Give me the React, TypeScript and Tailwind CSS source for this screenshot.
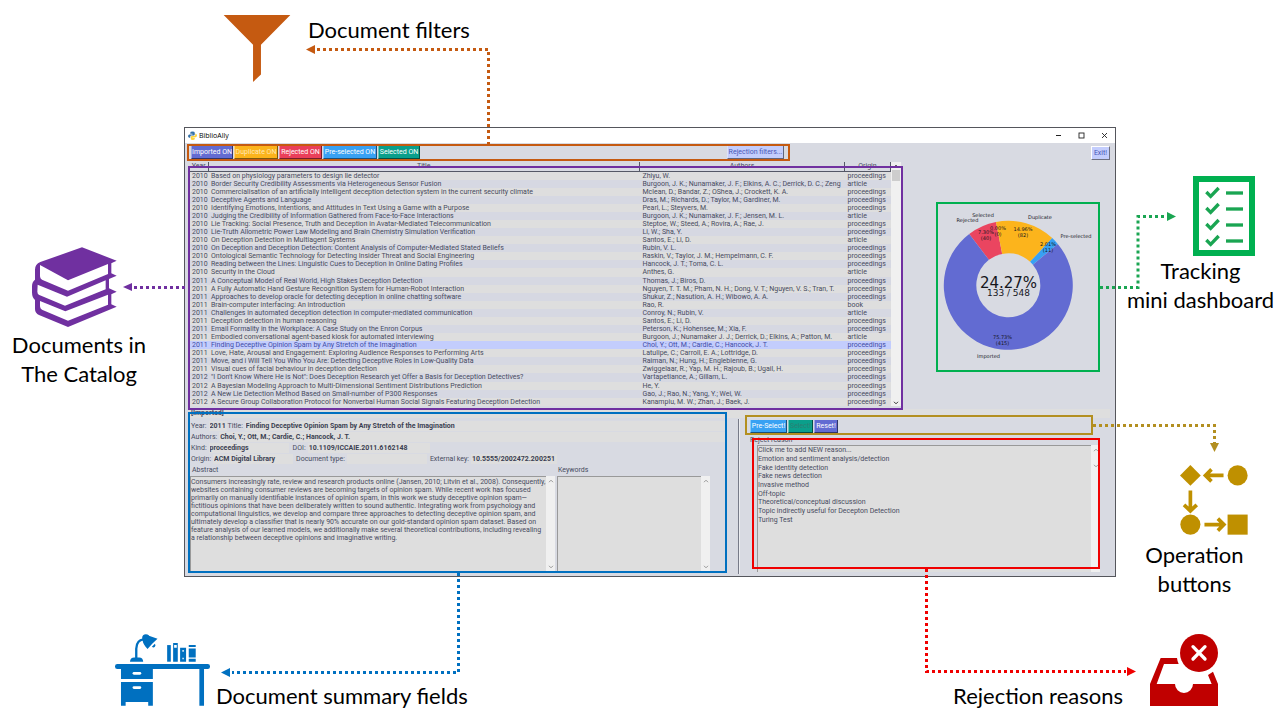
import type { ReactNode } from "react";

type Doc = [year: string, title: string, authors: string, origin: string];

const DOCS: Doc[] = [
  ["2010", "Based on physiology parameters to design lie detector", "Zhiyu, W.", "proceedings"],
  ["2010", "Border Security Credibility Assessments via Heterogeneous Sensor Fusion", "Burgoon, J. K.; Nunamaker, J. F.; Elkins, A. C.; Derrick, D. C.; Zeng", "article"],
  ["2010", "Commercialisation of an artificially intelligent deception detection system in the current security climate", "Mclean, D.; Bandar, Z.; OShea, J.; Crockett, K. A.", "proceedings"],
  ["2010", "Deceptive Agents and Language", "Dras, M.; Richards, D.; Taylor, M.; Gardiner, M.", "proceedings"],
  ["2010", "Identifying Emotions, Intentions, and Attitudes in Text Using a Game with a Purpose", "Pearl, L.; Steyvers, M.", "proceedings"],
  ["2010", "Judging the Credibility of Information Gathered from Face-to-Face Interactions", "Burgoon, J. K.; Nunamaker, J. F.; Jensen, M. L.", "article"],
  ["2010", "Lie Tracking: Social Presence, Truth and Deception in Avatar-Mediated Telecommunication", "Steptoe, W.; Steed, A.; Rovira, A.; Rae, J.", "proceedings"],
  ["2010", "Lie-Truth Allometric Power Law Modeling and Brain Chemistry Simulation Verification", "Li, W.; Sha, Y.", "proceedings"],
  ["2010", "On Deception Detection in Multiagent Systems", "Santos, E.; Li, D.", "article"],
  ["2010", "On Deception and Deception Detection: Content Analysis of Computer-Mediated Stated Beliefs", "Rubin, V. L.", "proceedings"],
  ["2010", "Ontological Semantic Technology for Detecting Insider Threat and Social Engineering", "Raskin, V.; Taylor, J. M.; Hempelmann, C. F.", "proceedings"],
  ["2010", "Reading between the Lines: Linguistic Cues to Deception in Online Dating Profiles", "Hancock, J. T.; Toma, C. L.", "proceedings"],
  ["2010", "Security in the Cloud", "Anthes, G.", "article"],
  ["2011", "A Conceptual Model of Real World, High Stakes Deception Detection", "Thomas, J.; Biros, D.", "proceedings"],
  ["2011", "A Fully Automatic Hand Gesture Recognition System for Human-Robot Interaction", "Nguyen, T. T. M.; Pham, N. H.; Dong, V. T.; Nguyen, V. S.; Tran, T.", "proceedings"],
  ["2011", "Approaches to develop oracle for detecting deception in online chatting software", "Shukur, Z.; Nasution, A. H.; Wibowo, A. A.", "proceedings"],
  ["2011", "Brain-computer interfacing: An introduction", "Rao, R.", "book"],
  ["2011", "Challenges in automated deception detection in computer-mediated communication", "Conroy, N.; Rubin, V.", "article"],
  ["2011", "Deception detection in human reasoning", "Santos, E.; Li, D.", "proceedings"],
  ["2011", "Email Formality in the Workplace: A Case Study on the Enron Corpus", "Peterson, K.; Hohensee, M.; Xia, F.", "proceedings"],
  ["2011", "Embodied conversational agent-based kiosk for automated interviewing", "Burgoon, J.; Nunamaker J. J.; Derrick, D.; Elkins, A.; Patton, M.", "article"],
  ["2011", "Finding Deceptive Opinion Spam by Any Stretch of the Imagination", "Choi, Y.; Ott, M.; Cardie, C.; Hancock, J. T.", "proceedings"],
  ["2011", "Love, Hate, Arousal and Engagement: Exploring Audience Responses to Performing Arts", "Latulipe, C.; Carroll, E. A.; Lottridge, D.", "proceedings"],
  ["2011", "Move, and i Will Tell You Who You Are: Detecting Deceptive Roles in Low-Quality Data", "Raiman, N.; Hung, H.; Englebienne, G.", "proceedings"],
  ["2011", "Visual cues of facial behaviour in deception detection", "Zwiggelaar, R.; Yap, M. H.; Rajoub, B.; Ugail, H.", "proceedings"],
  ["2012", "\"I Don't Know Where He is Not\": Does Deception Research yet Offer a Basis for Deception Detectives?", "Vartapetiance, A.; Gillam, L.", "proceedings"],
  ["2012", "A Bayesian Modeling Approach to Multi-Dimensional Sentiment Distributions Prediction", "He, Y.", "proceedings"],
  ["2012", "A New Lie Detection Method Based on Small-number of P300 Responses", "Gao, J.; Rao, N.; Yang, Y.; Wei, W.", "proceedings"],
  ["2012", "A Secure Group Collaboration Protocol for Nonverbal Human Social Signals Featuring Deception Detection", "Kanampiu, M. W.; Zhan, J.; Baek, J.", "proceedings"],
];

const SELECTED = 21;

const ABSTRACT =
  "Consumers increasingly rate, review and research products online (Jansen, 2010; Litvin et al., 2008). Consequently, " +
  "websites containing consumer reviews are becoming targets of opinion spam. While recent work has focused primarily on " +
  "manually identifiable instances of opinion spam, in this work we study deceptive opinion spam—fictitious opinions that " +
  "have been deliberately written to sound authentic. Integrating work from psychology and computational linguistics, we " +
  "develop and compare three approaches to detecting deceptive opinion spam, and ultimately develop a classifier that is " +
  "nearly 90% accurate on our gold-standard opinion spam dataset. Based on feature analysis of our learned models, we " +
  "additionally make several theoretical contributions, including revealing a relationship between deceptive opinions and " +
  "imaginative writing.";

const REASONS = [
  "Click me to add NEW reason...",
  "Emotion and sentiment analysis/detection",
  "Fake identity detection",
  "Fake news detection",
  "Invasive method",
  "Off-topic",
  "Theoretical/conceptual discussion",
  "Topic indirectly useful for Decepton Detection",
  "Turing Test",
];

const SLICES = [
  { name: "Rejected", color: "#ea4560", from: -37.3, to: -11 },
  { name: "Duplicate", color: "#fcb41c", from: -11, to: 42.9 },
  { name: "Pre-selected", color: "#38a1f3", from: 42.9, to: 50.1 },
  { name: "Imported", color: "#626bd2", from: 50.1, to: 322.7 },
];

function ring(cx: number, cy: number, outer: number, inner: number, from: number, to: number) {
  const at = (r: number, deg: number) => {
    const a = (deg * Math.PI) / 180;
    return `${(cx + r * Math.sin(a)).toFixed(2)} ${(cy - r * Math.cos(a)).toFixed(2)}`;
  };
  const large = to - from > 180 ? 1 : 0;
  return `M${at(outer, from)} A${outer} ${outer} 0 ${large} 1 ${at(outer, to)} L${at(inner, to)} A${inner} ${inner} 0 ${large} 0 ${at(inner, from)} Z`;
}

function Caption({ children, className = "" }: { children: ReactNode; className?: string }) {
  return (
    <p className={`whitespace-nowrap font-['Lato',sans-serif] text-[22px] leading-[29px] text-black ${className}`}>
      {children}
    </p>
  );
}

function Connector({ path, tip, color, width, height, className }: {
  path: string; tip: string; color: string; width: number; height: number; className: string;
}) {
  return (
    <svg width={width} height={height} className={`pointer-events-none absolute max-w-none overflow-visible ${className}`} aria-hidden="true">
      <path d={path} fill="none" stroke={color} strokeWidth="3" strokeDasharray="3 3" />
      <polygon points={tip} fill={color} />
    </svg>
  );
}

function ToolButton({ children, className }: { children: ReactNode; className: string }) {
  return (
    <button
      type="button"
      className={`h-[13px] shrink-0 whitespace-nowrap border-r border-b border-l border-l-white/40 border-r-black/50 border-b-black/50 text-center text-[7px] leading-[12px] ${className}`}
    >
      {children}
    </button>
  );
}

function Chevron({ up = false, className = "" }: { up?: boolean; className?: string }) {
  return (
    <svg viewBox="0 0 6 4" className={`h-1 w-1.5 ${className}`} aria-hidden="true">
      <path d={up ? "M1 3.2 3 1.2 5 3.2" : "M1 .8 3 2.8 5 .8"} fill="none" stroke="currentColor" strokeWidth="1" />
    </svg>
  );
}

function ScrollTrack({ className = "" }: { className?: string }) {
  return (
    <div className={`flex w-[9px] shrink-0 flex-col items-center justify-between bg-[#f0f0f0] py-[3px] text-[#999] ${className}`}>
      <Chevron up />
      <Chevron />
    </div>
  );
}

function Field({ id, label, value, width, className = "" }: {
  id: string; label: string; value: string; width: string; className?: string;
}) {
  return (
    <div className={`flex h-[11px] items-center ${className}`}>
      <label htmlFor={id} className="mr-[2px] shrink-0 whitespace-nowrap">{label}</label>
      <input id={id} readOnly value={value} className={`h-[10px] min-w-0 bg-[#dedede] px-px font-bold text-[#3b3f52] outline-none ${width}`} />
    </div>
  );
}

function Donut() {
  return (
    <svg viewBox="0 0 160 166" className="h-[166px] w-[160px]" role="img" aria-label="Tracking chart">
      {SLICES.map((s) => (
        <path key={s.name} d={ring(70.3, 81.3, 64.5, 32, s.from, s.to)} fill={s.color} />
      ))}
      <g fontFamily="'DejaVu Sans', sans-serif" fontSize="5" textAnchor="middle" fill="#15151c">
        <text x="45" y="13">Selected</text>
        <text x="29.5" y="18">Rejected</text>
        <text x="102" y="15">Duplicate</text>
        <text x="138" y="34">Pre-selected</text>
        <text x="50.5" y="154">Imported</text>
        <text x="48" y="30">7.30%</text>
        <text x="48" y="36">(40)</text>
        <text x="60" y="26">0.00%</text>
        <text x="60" y="32">(0)</text>
        <text x="85" y="27">14.96%</text>
        <text x="85" y="33">(82)</text>
        <text x="110" y="42">2.01%</text>
        <text x="110" y="48">(11)</text>
        <text x="64.5" y="135">75.73%</text>
        <text x="64.5" y="141">(415)</text>
        <text x="70.5" y="84" fontSize="15">24.27%</text>
        <text x="70.5" y="92" fontSize="9">133 / 548</text>
      </g>
    </svg>
  );
}

function FunnelIcon() {
  return (
    <svg viewBox="0 0 202 203" className="h-[67px] w-[68px] shrink-0" aria-hidden="true">
      <polygon points="0,0 202,0 113,90 113,180 89,203 89,90" fill="#c55a11" />
    </svg>
  );
}

function BooksIcon() {
  return (
    <svg viewBox="95 50 255 240" className="mr-[10px] h-20 w-[85px]" aria-hidden="true">
      <path
        fill="#7030a0"
        d="M245 51 349 91 333 99V129L349 136 326 146V174L349 184 333 192V222L349 229 203 290 116 254Q104 248 104 236V209Q95 202 95 186V168Q95 154 104 148V118Q104 101 120 95Z"
      />
      <path
        fill="#fff"
        d="M119 104 203 150 323 101V131L203 181 125 148Q119 145 119 138ZM112 163 200 199 316 150V177L194 226 117 194Q111 191 111 184ZM119 212 195 243 323 193V223L203 271 125 238Q119 235 119 228Z"
      />
    </svg>
  );
}

function ChecklistIcon() {
  return (
    <svg viewBox="0 0 186 240" className="ml-[46px] h-20 w-[62px]" aria-hidden="true">
      <path fill="#00b050" fillRule="evenodd" d="M0 0H186V240H0ZM18 18V222H168V18Z" />
      {[50, 98, 146, 194].map((y) => (
        <g key={y} fill="none" stroke="#1aa552" strokeWidth="10">
          <path d={`M40 ${y - 2} l13 13 24 -25`} />
          <path d={`M99 ${y + 1} H150`} />
        </g>
      ))}
    </svg>
  );
}

function FlowIcon() {
  return (
    <svg viewBox="0 0 203 209" className="ml-[38px] h-[70px] w-[68px]" aria-hidden="true">
      <g fill="#bf9000">
        <polygon points="31,0 62,31 31,62 0,31" />
        <circle cx="172" cy="31" r="30" />
        <circle cx="31" cy="178" r="30" />
        <rect x="142" y="148" width="60" height="60" />
      </g>
      <g fill="none" stroke="#bf9000" strokeWidth="11">
        <path d="M130 31H78M94 13 76 31 94 49" />
        <path d="M31 76V134M12 119 31 137 50 119" />
        <path d="M73 178H131M113 160 131 178 113 196" />
      </g>
    </svg>
  );
}

function DeskIcon() {
  return (
    <svg viewBox="0 0 286 216" className="mb-1 h-[72px] w-[95px] shrink-0" aria-hidden="true">
      <g fill="#0070c0">
        <rect x="0" y="90" width="286" height="15" rx="7" />
        <path d="M18 104H114V135H18ZM18 144H114V216H100V204H32V216H18ZM254 104H268V216H254Z" />
        <path d="M45 83Q46 70 58 70H73Q84 70 85 83Z" />
        <circle cx="93" cy="11" r="11" />
        <path d="M84 8 100 4 128 14 112 29 98 45 92 38Q80 24 84 8Z" />
        <path d="M111 38 120 29Q124 33 120 38T111 38Z" />
        <rect x="157" y="33" width="11" height="50" />
        <path fillRule="evenodd" d="M175 27H189V83H175ZM178 33V41H186V33Z" />
        <path fillRule="evenodd" d="M196 41H214V83H196ZM203 48V53H207V48ZM203 71V76H207V71Z" />
        <path d="M222 33H243V39H222ZM222 43H243V70H222ZM222 74H243V83H222Z" />
      </g>
      <path d="M64 74V44Q65 18 86 16" fill="none" stroke="#0070c0" strokeWidth="7" />
      <g fill="#fff">
        <rect x="53" y="114" width="26" height="8" rx="4" />
        <rect x="53" y="157" width="26" height="8" rx="4" />
      </g>
    </svg>
  );
}

function RejectTrayIcon() {
  return (
    <svg viewBox="0 0 204 216" className="mb-1 ml-[27px] h-[72px] w-[68px] shrink-0" aria-hidden="true">
      <path
        fill="#c00000"
        d="M0 150 32 72H81Q82 82 86 90H42L20 150H75A27 27 0 0 0 129 150H185L174 123 189 113 204 150V216H0Z"
      />
      <circle cx="147" cy="57" r="57" fill="#c00000" />
      <path d="M129 38 165 75M165 38 129 75" stroke="#fff" strokeWidth="10" strokeLinecap="round" />
    </svg>
  );
}

function TitleBar() {
  return (
    <div className="flex h-[15px] items-center bg-white pr-[7px] pl-[3px]">
      <svg viewBox="0 0 16 16" className="h-[9px] w-[9px]" aria-hidden="true">
        <path d="M8 1Q4 1 4 3V5H8V6H2Q0 7 0 9T2 12H4V10Q4 8 6 8H10Q12 8 12 6V3Q12 1 8 1Z" fill="#3672a8" />
        <path d="M8 16Q12 16 12 14V12H8V11H14Q16 10 16 8T14 5H13V7Q13 9 11 9H7Q5 9 5 11V14Q5 16 8 16Z" fill="#ffd43b" />
      </svg>
      <h1 className="ml-[2px] font-['Open_Sans',sans-serif] text-[7px] leading-[15px] text-black">BiblioAlly</h1>
      <div className="ml-auto flex items-center gap-4 text-[#222]">
        <button type="button" aria-label="Minimize" className="flex h-[7px] w-[7px] items-center">
          <svg viewBox="0 0 7 7" className="h-[7px] w-[7px]"><path d="M1 3.5H6" stroke="currentColor" strokeWidth="1" /></svg>
        </button>
        <button type="button" aria-label="Maximize" className="h-[7px] w-[7px]">
          <svg viewBox="0 0 7 7" className="h-[7px] w-[7px]"><rect x="1" y="1" width="5" height="5" fill="none" stroke="currentColor" strokeWidth=".9" /></svg>
        </button>
        <button type="button" aria-label="Close" className="h-[7px] w-[7px]">
          <svg viewBox="0 0 7 7" className="h-[7px] w-[7px]"><path d="M1 1 6 6M6 1 1 6" stroke="currentColor" strokeWidth=".9" /></svg>
        </button>
      </div>
    </div>
  );
}

function FilterBar() {
  return (
    <div className="mt-px flex pr-[5px] pl-[2px]">
      <div className="relative flex h-[17px] min-w-0 flex-1 items-center gap-px border-2 border-[#c55a11] pr-1 pl-[2px] text-white">
        <ToolButton className="w-[42px] bg-[#626bd2]">Imported ON</ToolButton>
        <ToolButton className="w-[44px] bg-[#fcb41c] text-[#ffe9b8]">Duplicate ON</ToolButton>
        <ToolButton className="w-[43px] bg-[#ea3f5a]">Rejected ON</ToolButton>
        <ToolButton className="w-[54px] bg-[#38a1f3]">Pre-selected ON</ToolButton>
        <ToolButton className="w-[42px] bg-[#0a9f8b]">Selected ON</ToolButton>
        <ToolButton className="ml-auto w-[57px] bg-[#c3cdfd] text-[#4858b8]">Rejection filters...</ToolButton>
        <Connector
          className="-top-[103px] left-[117px]"
          width={185}
          height={101}
          color="#c55a11"
          path="M11 6.5H182.5V101"
          tip="0,6.5 9,2 9,11"
        />
      </div>
      <div className="w-[301px] shrink-0" />
      <button type="button" className="mt-[2px] h-[14px] w-[19px] shrink-0 border border-t-white border-r-[#6d7080] border-b-[#6d7080] border-l-white bg-[#c3cdfd] text-[7px] leading-[12px] text-[#4858b8]">
        Exit!
      </button>
    </div>
  );
}

function Catalog() {
  return (
    <div className="relative ml-[5px] flex h-[244px] min-w-0 flex-1">
      <table className="h-full w-full table-fixed border-collapse text-left">
        <colgroup>
          <col className="w-[18px]" />
          <col />
          <col className="w-[205px]" />
          <col className="w-[46px]" />
        </colgroup>
        <thead>
          <tr className="h-[9px] text-center">
            {["Year", "Title", "Authors", "Origin"].map((h) => (
              <th key={h} className="border-r border-b border-[#555866] p-0 text-center font-normal leading-[8px]">{h}</th>
            ))}
          </tr>
        </thead>
        <tbody>
          {DOCS.map(([year, title, authors, origin], i) => (
            <tr
              key={title}
              className={i === SELECTED ? "bg-[#c3cdfd] text-[#3f4ca6]" : i % 2 === 0 ? "bg-[#dedede]" : "bg-[#d6d8e2]"}
            >
              <td className="whitespace-nowrap p-0 pl-[2px]">{year}</td>
              <td className="whitespace-nowrap p-0 pl-[3px]">{title}</td>
              <td className="whitespace-nowrap p-0 pl-[3px]">{authors}</td>
              <td className="whitespace-nowrap p-0 pl-[3px]">{origin}</td>
            </tr>
          ))}
        </tbody>
      </table>
      <div className="flex w-[10px] shrink-0 flex-col items-center bg-[#f0f0f0] pt-[2px] pb-px text-[#333]">
        <Chevron up />
        <div className="mt-[2px] h-[11px] w-2 bg-[#cdcdcd]" />
        <Chevron className="mt-auto" />
      </div>
      <div className="pointer-events-none absolute top-1 -right-[2px] -bottom-1 -left-[2px] border-2 border-[#7030a0]">
        <Connector
          className="top-[114px] -left-[67px]"
          width={65}
          height={10}
          color="#7030a0"
          path="M11 5.5H65"
          tip="0,5 9,1 9,9"
        />
      </div>
    </div>
  );
}

function Summary() {
  return (
    <section className="relative ml-[5px] min-w-0 flex-1 pt-[2px] pr-[11px]">
      <div className="flex pl-px">
        <Field id="year" label="Year:" value="2011" width="w-[18px]" />
        <Field id="title" label="Title:" value="Finding Deceptive Opinion Spam by Any Stretch of the Imagination" width="flex-1" className="ml-px flex-1" />
      </div>
      <Field id="authors" label="Authors:" value="Choi, Y.; Ott, M.; Cardie, C.; Hancock, J. T." width="flex-1" className="pl-px" />
      <div className="flex pl-px">
        <Field id="kind" label="Kind:" value="proceedings" width="w-[80px]" />
        <Field id="doi" label="DOI:" value="10.1109/ICCAIE.2011.6162148" width="w-[122px]" className="ml-1" />
      </div>
      <div className="flex pl-px">
        <Field id="origin" label="Origin:" value="ACM Digital Library" width="w-[80px]" />
        <Field id="doctype" label="Document type:" value="" width="w-[80px]" className="ml-[3px]" />
        <Field id="extkey" label="External key:" value="10.5555/2002472.200251" width="w-[86px]" className="ml-[3px]" />
      </div>
      <div className="flex gap-[2px]">
        <div className="min-w-0 flex-1">
          <label htmlFor="abstract" className="block h-3 pl-[2px] leading-[12px]">Abstract</label>
          <div className="flex h-[96px]">
            <textarea
              id="abstract"
              readOnly
              value={ABSTRACT}
              className="block h-full min-w-0 flex-1 resize-none overflow-hidden border-t border-l border-[#999] bg-[#dedede] pt-px text-[7px] leading-[8px] outline-none"
            />
            <ScrollTrack />
          </div>
        </div>
        <div className="mr-[17px] w-[153px] shrink-0">
          <label htmlFor="keywords" className="block h-3 pl-px leading-[12px]">Keywords</label>
          <div className="flex h-[96px]">
            <textarea id="keywords" readOnly value="" className="block h-full min-w-0 flex-1 resize-none border-t border-l border-[#999] bg-[#dedede] outline-none" />
            <ScrollTrack />
          </div>
        </div>
      </div>
      <div className="pointer-events-none absolute -top-[6px] right-[11px] -left-[2px] h-[161px] border-2 border-[#0070c0]">
        <Connector
          className="top-[159px] left-[31px]"
          width={240}
          height={107}
          color="#0070c0"
          path="M237.5 0V99.5H11"
          tip="0,99.5 9,95 9,104"
        />
      </div>
    </section>
  );
}

function Operations() {
  return (
    <section className="flex w-[377px] shrink-0">
      <div className="mt-px h-[155px] w-[2px] border-r border-l border-r-white/50 border-l-[#777a88]" />
      <div className="min-w-0 flex-1 pr-[15px] pl-[5px]">
        <div className="relative -mt-[3px] mr-[7px] flex h-5 gap-px border-2 border-[#b38f20] pt-[3px] pl-[3px] text-white">
          <ToolButton className="w-[37px] bg-[#38a1f3]">Pre-Select!</ToolButton>
          <ToolButton className="w-[25px] bg-[#0a9f8b] text-[#2a7f73]">Select!</ToolButton>
          <ToolButton className="w-[24px] bg-[#626bd2]">Reset!</ToolButton>
          <Connector
            className="top-[3px] left-full ml-[2px]"
            width={126}
            height={32}
            color="#b38f20"
            path="M0 5.5H121.5V24"
            tip="121.5,32 117,23 126,23"
          />
        </div>
        <div className="relative">
          <h2 id="reasons" className="h-[10px] pl-[5px] leading-[10px]">Reject reason</h2>
          <div className="ml-3 flex h-[127px]">
            <ul role="listbox" aria-labelledby="reasons" className="flex min-w-0 flex-1 flex-col border-t border-l border-[#999] bg-[#dedede] pb-[48px]">
              {REASONS.map((r) => (
                <li key={r} role="option" aria-selected="false" className="flex flex-1 items-center whitespace-nowrap leading-[8px]">{r}</li>
              ))}
            </ul>
            <div className="w-[9px] bg-[#f0f0f0]">
              <ScrollTrack className="h-[26px]" />
            </div>
          </div>
          <div className="pointer-events-none absolute top-[3px] right-0 left-[7px] h-[131px] border-2 border-[#f00000]">
            <Connector
              className="top-[129px] -right-[38px]"
              width={211}
              height={107}
              color="#f00000"
              path="M1.5 0V102.5H201"
              tip="211,102.5 202,98 202,107"
            />
          </div>
        </div>
      </div>
    </section>
  );
}

export default function App() {
  return (
    <main className="min-h-screen bg-white">
      <header className="flex h-[127px] items-start pt-[15px] pl-[223px]">
        <FunnelIcon />
        <Caption className="ml-[17px]">Document filters</Caption>
      </header>

      <div className="flex items-start">
        <aside className="flex w-[184px] shrink-0 flex-col items-center pt-[120px] pr-[26px] text-center">
          <BooksIcon />
          <Caption className="mt-[3px]">Documents in<br />The Catalog</Caption>
        </aside>

        <div className="min-w-0 flex-1 border border-[#55565c] bg-[#d8dae2] font-['Roboto','Liberation_Sans',sans-serif] text-[7px] leading-[8px] text-[#474b60]">
          <TitleBar />
          <FilterBar />
          <div className="mt-px flex">
            <Catalog />
            <div className="w-[214px] shrink-0 pt-10 pr-[15px] pl-[35px]">
              <div className="relative h-[170px] border-2 border-[#00b050]">
                <Donut />
                <Connector
                  className="top-[7px] left-full ml-[2px]"
                  width={76}
                  height={79}
                  color="#1aa552"
                  path="M0 76.5H38V5.5H66"
                  tip="76,5.5 67,1 67,10"
                />
              </div>
            </div>
          </div>
          <p className="mt-[3px] mr-[5px] ml-[5px] h-[9px] bg-[#dedede] pl-px font-bold leading-[9px]">[Imported]</p>
          <div className="flex h-[158px]">
            <Summary />
            <Operations />
          </div>
        </div>

        <aside className="flex w-[164px] shrink-0 flex-col items-center pt-[49px] pl-[5px] text-center">
          <ChecklistIcon />
          <Caption>Tracking<br />mini dashboard</Caption>
          <div className="mt-[151px] flex flex-col items-center pr-3">
            <FlowIcon />
            <Caption className="mt-[5px]">Operation<br />buttons</Caption>
          </div>
        </aside>
      </div>

      <footer className="flex items-end pt-9 pr-[62px] pl-[115px]">
        <DeskIcon />
        <Caption className="ml-[6px]">Document summary fields</Caption>
        <Caption className="ml-auto">Rejection reasons</Caption>
        <RejectTrayIcon />
      </footer>
    </main>
  );
}
